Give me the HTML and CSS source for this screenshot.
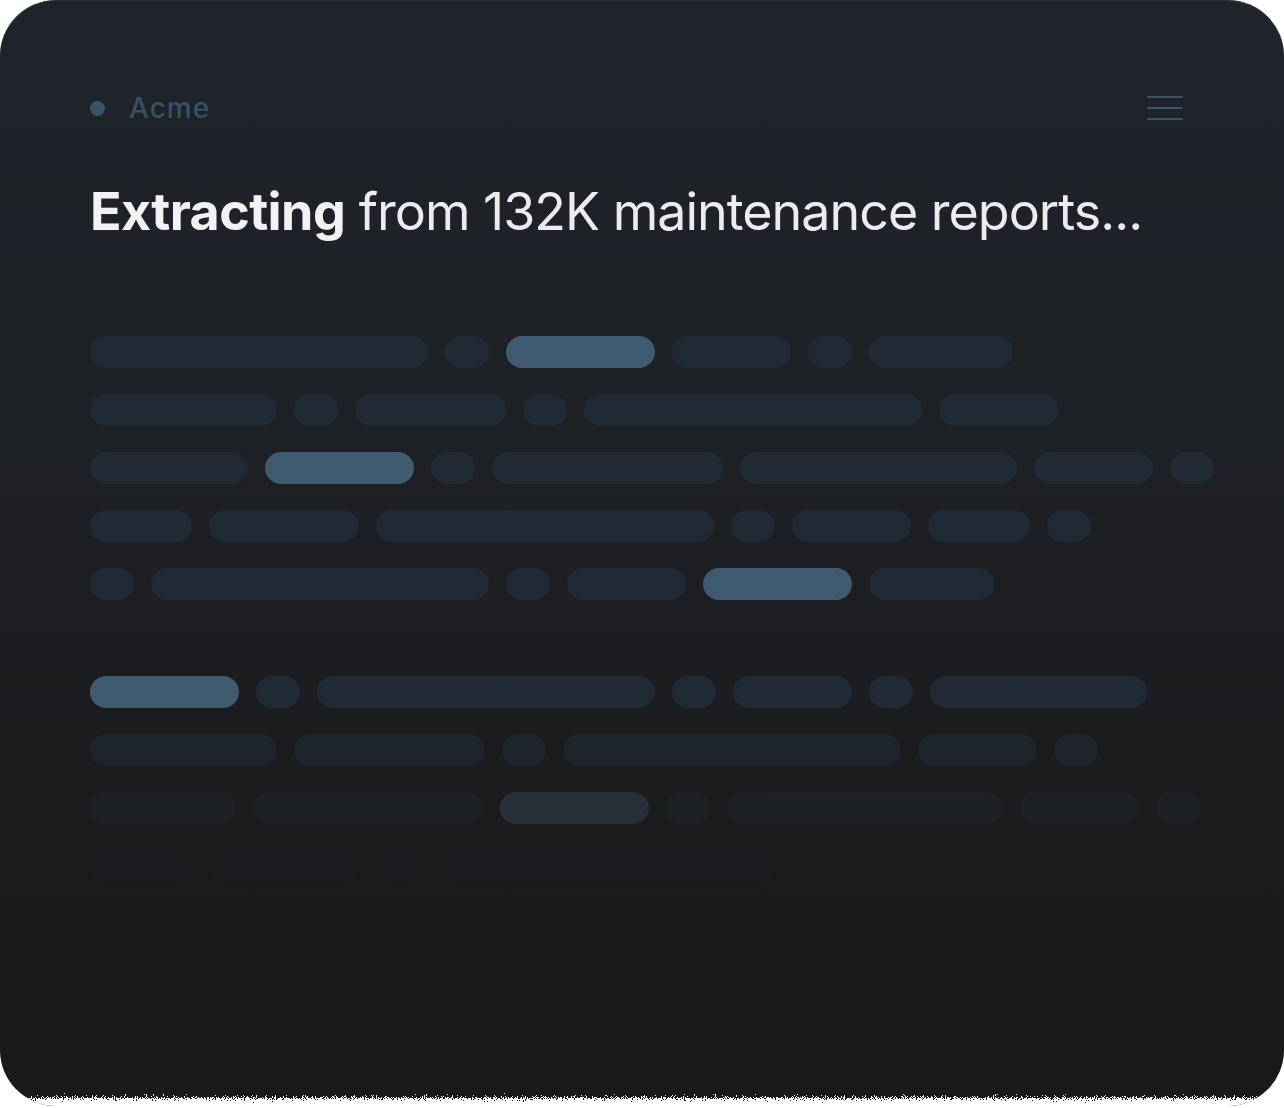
FILE: index.html
```html
<!DOCTYPE html>
<html lang="en">

<head>
    <meta charset="UTF-8">
    <meta name="viewport" content="width=device-width, initial-scale=1.0">
    <title>Acme - Extracting</title>
    <link rel="stylesheet" href="styles.css">
</head>

<body>
    <div class="card">
        <!-- Top bar -->
        <header class="topbar">
            <div class="brand">
                <span class="brand-dot"></span>
                <span class="brand-name">Acme</span>
            </div>
            <button class="menu" aria-label="Menu">
                <span></span>
                <span></span>
                <span></span>
            </button>
        </header>

        <h1 class="title"><strong>Extracting</strong> from 132K maintenance reports...</h1>

        <!-- Skeleton lines -->
        <div class="block">
            <div class="row">
                <span class="pill" style="width: 338px;"></span>
                <span class="pill" style="width: 44px;"></span>
                <span class="pill hi" style="width: 149px;"></span>
                <span class="pill" style="width: 119px;"></span>
                <span class="pill" style="width: 44px;"></span>
                <span class="pill" style="width: 144px;"></span>
            </div>
            <div class="row">
                <span class="pill" style="width: 187px;"></span>
                <span class="pill" style="width: 44px;"></span>
                <span class="pill" style="width: 151px;"></span>
                <span class="pill" style="width: 44px;"></span>
                <span class="pill" style="width: 338px;"></span>
                <span class="pill" style="width: 119px;"></span>
            </div>
            <div class="row">
                <span class="pill" style="width: 158px;"></span>
                <span class="pill hi" style="width: 149px;"></span>
                <span class="pill" style="width: 44px;"></span>
                <span class="pill" style="width: 231px;"></span>
                <span class="pill" style="width: 277px;"></span>
                <span class="pill" style="width: 119px;"></span>
                <span class="pill" style="width: 44px;"></span>
            </div>
            <div class="row">
                <span class="pill" style="width: 102px;"></span>
                <span class="pill" style="width: 150px;"></span>
                <span class="pill" style="width: 338px;"></span>
                <span class="pill" style="width: 44px;"></span>
                <span class="pill" style="width: 119px;"></span>
                <span class="pill" style="width: 102px;"></span>
                <span class="pill" style="width: 44px;"></span>
            </div>
            <div class="row">
                <span class="pill" style="width: 44px;"></span>
                <span class="pill" style="width: 338px;"></span>
                <span class="pill" style="width: 44px;"></span>
                <span class="pill" style="width: 119px;"></span>
                <span class="pill hi" style="width: 149px;"></span>
                <span class="pill" style="width: 125px;"></span>
            </div>
        </div>

        <div class="block">
            <div class="row">
                <span class="pill hi" style="width: 149px;"></span>
                <span class="pill" style="width: 44px;"></span>
                <span class="pill" style="width: 338px;"></span>
                <span class="pill" style="width: 44px;"></span>
                <span class="pill" style="width: 119px;"></span>
                <span class="pill" style="width: 44px;"></span>
                <span class="pill" style="width: 217px;"></span>
            </div>
            <div class="row fade-1">
                <span class="pill" style="width: 187px;"></span>
                <span class="pill" style="width: 191px;"></span>
                <span class="pill" style="width: 44px;"></span>
                <span class="pill" style="width: 338px;"></span>
                <span class="pill" style="width: 119px;"></span>
                <span class="pill" style="width: 44px;"></span>
            </div>
            <div class="row fade-2">
                <span class="pill" style="width: 146px;"></span>
                <span class="pill" style="width: 230px;"></span>
                <span class="pill hi" style="width: 149px;"></span>
                <span class="pill" style="width: 44px;"></span>
                <span class="pill" style="width: 276px;"></span>
                <span class="pill" style="width: 119px;"></span>
                <span class="pill" style="width: 44px;"></span>
            </div>
            <div class="row fade-3">
                <span class="pill" style="width: 102px;"></span>
                <span class="pill" style="width: 150px;"></span>
                <span class="pill" style="width: 44px;"></span>
                <span class="pill" style="width: 339px;"></span>
            </div>
        </div>

        <!-- Grainy bottom edge -->
        <svg class="grain" width="1284" height="18" viewBox="0 0 1284 18" preserveAspectRatio="none">
            <defs>
                <linearGradient id="grainFade" x1="0" y1="0" x2="0" y2="1">
                    <stop offset="0" stop-color="#fff" stop-opacity="0"></stop>
                    <stop offset="0.8" stop-color="#fff" stop-opacity="1"></stop>
                </linearGradient>
                <filter id="grainNoise" x="0" y="0" width="100%" height="100%">
                    <feTurbulence type="fractalNoise" baseFrequency="0.9" numOctaves="1" seed="4" result="noise"></feTurbulence>
                    <feColorMatrix in="noise" type="matrix" values="0 0 0 0 0  0 0 0 0 0  0 0 0 0 0  1 0 0 0 0" result="noiseAlpha"></feColorMatrix>
                    <feComposite in="noiseAlpha" in2="SourceGraphic" operator="arithmetic" k2="1.2" k3="1.1" k4="-0.85" result="mix"></feComposite>
                    <feComponentTransfer in="mix" result="dots">
                        <feFuncA type="discrete" tableValues="0 1"></feFuncA>
                    </feComponentTransfer>
                    <feFlood flood-color="#ffffff"></feFlood>
                    <feComposite in2="dots" operator="in"></feComposite>
                </filter>
            </defs>
            <rect width="1284" height="18" fill="url(#grainFade)" filter="url(#grainNoise)"></rect>
        </svg>
    </div>
</body>

</html>
```

FILE: styles.css
```css
body {
    margin: 0;
    padding: 0;
    background: #ffffff;
    font-family: Inter, "Noto Sans", sans-serif;
}

.card {
    position: relative;
    box-sizing: border-box;
    width: 1284px;
    height: 1106px;
    padding: 84px 101px 0 90px;
    border-radius: 56px;
    border-top: 1px solid #283038;
    background: linear-gradient(180deg, #1f242b 0%, #1e2227 30%, #1c1d20 60%, #1a1a1a 85%, #1a1a1a 100%);
    overflow: hidden;
}

.topbar {
    display: flex;
    justify-content: space-between;
    align-items: center;
    height: 46px;
}

.brand {
    display: flex;
    align-items: center;
    gap: 24px;
}

.brand-dot {
    width: 15px;
    height: 15px;
    border-radius: 50%;
    background: #3b5366;
}

.brand-name {
    font-size: 28px;
    font-weight: 500;
    color: #3a5165;
    letter-spacing: 1px;
}

.menu {
    display: flex;
    flex-direction: column;
    gap: 9px;
    width: 36px;
    padding: 0;
    border: none;
    background: none;
}

.menu span {
    display: block;
    height: 2.3px;
    border-radius: 2px;
    background: #3d5366;
}

.title {
    margin: 55px 0 98px;
    font-size: 52px;
    line-height: 1;
    font-weight: 400;
    color: #ececec;
    letter-spacing: -1px;
    white-space: nowrap;
}

.title strong {
    font-weight: 700;
    color: #f2f2f2;
    letter-spacing: -0.6px;
}

.block {
    display: flex;
    flex-direction: column;
    gap: 26px;
}

.block + .block {
    margin-top: 76px;
}

.row {
    display: flex;
    gap: 17px;
}

.pill {
    flex-shrink: 0;
    height: 32px;
    border-radius: 16px;
    background: #1f2a35;
}

.pill.hi {
    background: #405a6f;
}

.fade-1 {
    opacity: 0.6;
}

.fade-2 {
    opacity: 0.32;
}

.fade-3 {
    opacity: 0.17;
}

/* sits over the bottom edge of the card */
.grain {
    position: absolute;
    left: 0;
    bottom: 0;
    display: block;
}
```
